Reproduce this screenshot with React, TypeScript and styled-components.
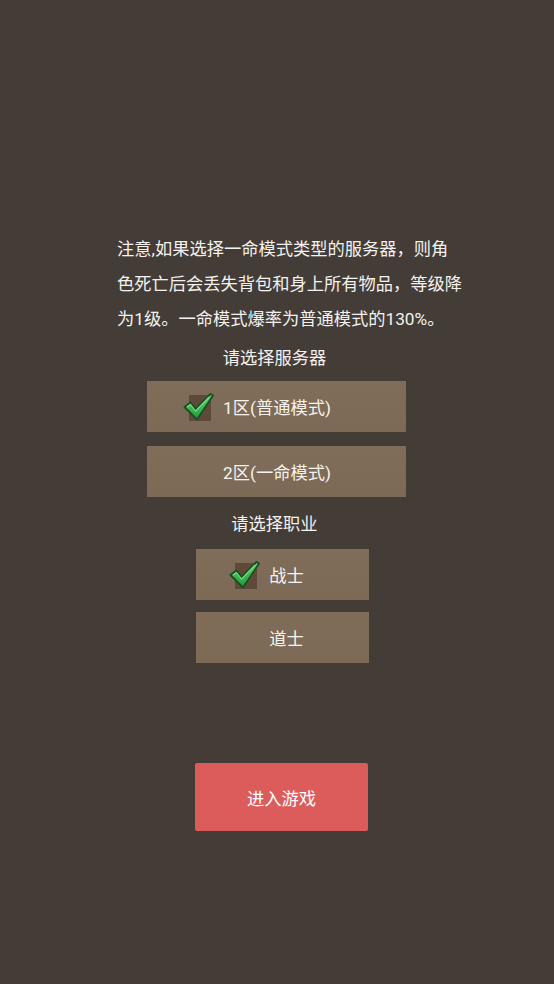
import React, { useState } from 'react';
import styled, { createGlobalStyle } from 'styled-components';

const GlobalStyle = createGlobalStyle`
  html, body {
    margin: 0;
    padding: 0;
    background: #433c37;
  }
  body {
    font-family: Roboto, "Noto Sans CJK SC", "Noto Sans", sans-serif;
    color: #f4f1ee;
  }
`;

const Page = styled.div`
  width: 554px;
  height: 984px;
  background: #433c37;
  display: flex;
  flex-direction: column;
  padding-top: 232px;
  box-sizing: border-box;
`;

const Notice = styled.p`
  margin: 0 0 0 117px;
  width: 347px;
  font-size: 17.25px;
  line-height: 35px;
`;

const Label = styled.div<{ $mt: number; $mb: number }>`
  margin: ${p => p.$mt}px 0 ${p => p.$mb}px 0;
  font-size: 17.25px;
  line-height: 24px;
  text-align: center;
  width: 549px;
`;

const Options = styled.div<{ $left: number; $gap: number }>`
  display: flex;
  flex-direction: column;
  gap: ${p => p.$gap}px;
  margin-left: ${p => p.$left}px;
`;

const Option = styled.button<{ $w: number }>`
  width: ${p => p.$w}px;
  height: 51px;
  border: none;
  padding: 0;
  background: linear-gradient(180deg, #7f6c59 0%, #7c6956 100%);
  color: #f6f3ef;
  font-family: inherit;
  font-size: 17.25px;
  display: flex;
  align-items: center;
  justify-content: center;
  cursor: pointer;
`;

const OptText = styled.span<{ $shift: number }>`
  position: relative;
  margin-left: ${p => p.$shift}px;
`;

const Tick = styled.span`
  position: absolute;
  right: calc(100% + 8px);
  top: 50%;
  transform: translateY(-50%);
  width: 32px;
  height: 30px;
`;

const Box = styled.span`
  position: absolute;
  left: 6px;
  top: 3px;
  width: 22px;
  height: 26px;
  background: #5e4a3a;
`;

const Enter = styled.button`
  margin: 100px 0 0 195px;
  width: 173px;
  height: 68px;
  border: none;
  border-radius: 2px;
  background: #dc5c5b;
  color: #fff;
  font-family: inherit;
  font-size: 17.25px;
  cursor: pointer;
`;

function Check() {
  return (
    <Tick>
      <Box />
      <svg width="32" height="30" viewBox="0 0 32 30" style={{ position: 'absolute', left: 0, top: 0 }}>
        <defs>
          <linearGradient id="g" x1="0" y1="0" x2="0" y2="1">
            <stop offset="0" stopColor="#5fd86c" />
            <stop offset="1" stopColor="#23963a" />
          </linearGradient>
        </defs>
        <path
          d="M1.5 15 L7.5 10.5 L12.5 17 L27.5 2 L30 3.5 L14 27.5 Z"
          fill="url(#g)"
          stroke="#174f20"
          strokeWidth="1.8"
          strokeLinejoin="round"
        />
        <path d="M4 15 L7.5 12.5 L12.5 19 L26 5" fill="none" stroke="#8ef095" strokeWidth="1.2" opacity="0.7" />
      </svg>
    </Tick>
  );
}

export default function App() {
  const [server, setServer] = useState(0);
  const [job, setJob] = useState(0);
  const servers = ['1区(普通模式)', '2区(一命模式)'];
  const jobs = ['战士', '道士'];
  return (
    <>
      <GlobalStyle />
      <Page>
        <Notice>
          注意,如果选择一命模式类型的服务器，则角色死亡后会丢失背包和身上所有物品，等级降为1级。一命模式爆率为普通模式的130%。
        </Notice>
        <Label $mt={9} $mb={11}>请选择服务器</Label>
        <Options $left={147} $gap={14}>
          {servers.map((s, i) => (
            <Option key={s} $w={259} onClick={() => setServer(i)}>
              <OptText $shift={1}>
                {server === i && <Check />}
                {s}
              </OptText>
            </Option>
          ))}
        </Options>
        <Label $mt={15} $mb={13}>请选择职业</Label>
        <Options $left={196} $gap={12}>
          {jobs.map((j, i) => (
            <Option key={j} $w={173} onClick={() => setJob(i)}>
              <OptText $shift={8}>
                {job === i && <Check />}
                {j}
              </OptText>
            </Option>
          ))}
        </Options>
        <Enter>进入游戏</Enter>
      </Page>
    </>
  );
}
